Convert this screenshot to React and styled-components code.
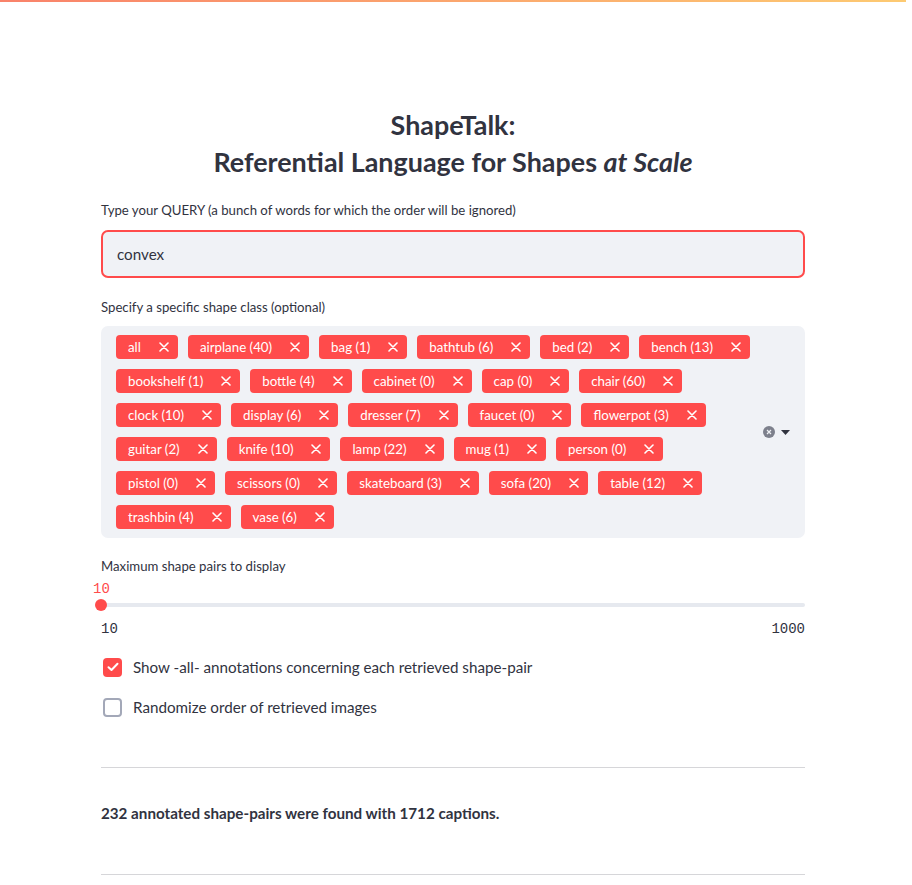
import React from 'react'
import styled, { createGlobalStyle } from 'styled-components'

const GlobalStyle = createGlobalStyle`
  html, body {
    margin: 0;
    padding: 0;
    background: #ffffff;
  }
  body {
    font-family: Lato, "Liberation Sans", sans-serif;
    color: #31333f;
  }
  * { box-sizing: border-box; }
`

const Decoration = styled.div`
  height: 2px;
  background: linear-gradient(90deg, #f9826a, #fdca72);
`

const Page = styled.div`
  padding-right: 6px;
`

const Block = styled.div`
  max-width: 736px;
  margin: 0 auto;
  padding: 104px 16px 40px;
  display: flex;
  flex-direction: column;
`

const Title = styled.h2`
  margin: 0 0 20px;
  font-size: 26.9px;
  line-height: 37px;
  font-weight: 700;
  text-align: center;
  color: #31333f;
  em { font-style: italic; }
`

const Label = styled.div`
  font-size: 13.2px;
  line-height: 20px;
  margin-bottom: ${p => p.mb || 10}px;
`

const Field = styled.div`
  margin-bottom: ${p => p.mb || 0}px;
`

const Input = styled.div`
  height: 48px;
  border: 2px solid #ff4b4b;
  border-radius: 7px;
  background: #f0f2f6;
  padding: 0 14px;
  display: flex;
  align-items: center;
  font-size: 15.2px;
`

const Select = styled.div`
  background: #f0f2f6;
  border-radius: 7px;
  padding: 4px 0 4px 10px;
  display: flex;
  align-items: center;
`

const Tags = styled.div`
  flex: 1;
  display: flex;
  flex-wrap: wrap;
`

const Tag = styled.span`
  height: 24px;
  margin: 5px;
  padding: 0 9px 0 12px;
  background: #ff4b4b;
  color: #ffffff;
  border-radius: 4px;
  display: inline-flex;
  align-items: center;
  font-size: 13.3px;
  white-space: nowrap;
  svg { margin-left: 18px; }
`

const Controls = styled.div`
  width: 44px;
  display: flex;
  align-items: center;
  gap: 6px;
  padding-left: 2px;
`

const SliderBox = styled.div`
  display: flex;
  flex-direction: column;
  margin-bottom: 16px;
`

const ValueLabel = styled.div`
  font-family: "Liberation Mono", "DejaVu Sans Mono", monospace;
  font-size: 14px;
  line-height: 20px;
  color: #ff4b4b;
  margin-left: -8px;
`

const Track = styled.div`
  position: relative;
  height: 12px;
  display: flex;
  align-items: center;
  &::before {
    content: '';
    flex: 1;
    height: 4px;
    border-radius: 2px;
    background: #e6e9ef;
  }
`

const Thumb = styled.span`
  position: absolute;
  left: -6px;
  top: 0;
  width: 12px;
  height: 12px;
  border-radius: 50%;
  background: #ff4b4b;
`

const Ticks = styled.div`
  margin-top: 8px;
  display: flex;
  justify-content: space-between;
  font-family: "Liberation Mono", "DejaVu Sans Mono", monospace;
  font-size: 14px;
  line-height: 20px;
  color: #31333f;
`

const CheckRow = styled.label`
  display: flex;
  align-items: center;
  height: 24px;
  margin-bottom: 16px;
  font-size: 15.2px;
  gap: 11px;
  padding-left: 2px;
`

const Box = styled.span`
  width: 19px;
  height: 19px;
  border-radius: 4px;
  display: inline-flex;
  align-items: center;
  justify-content: center;
  background: ${p => (p.checked ? '#ff4b4b' : '#ffffff')};
  border: ${p => (p.checked ? 'none' : '2px solid #a3a8b8')};
`

const Rule = styled.hr`
  border: none;
  border-top: 1px solid #d6d6d9;
  margin: ${p => p.mt}px 0 0;
  width: 100%;
`

const Summary = styled.p`
  margin: 33px 0 49px;
  font-size: 15.2px;
  line-height: 24px;
  font-weight: 700;
`

const classes = [
  'all', 'airplane (40)', 'bag (1)', 'bathtub (6)', 'bed (2)', 'bench (13)',
  'bookshelf (1)', 'bottle (4)', 'cabinet (0)', 'cap (0)', 'chair (60)',
  'clock (10)', 'display (6)', 'dresser (7)', 'faucet (0)', 'flowerpot (3)',
  'guitar (2)', 'knife (10)', 'lamp (22)', 'mug (1)', 'person (0)',
  'pistol (0)', 'scissors (0)', 'skateboard (3)', 'sofa (20)', 'table (12)',
  'trashbin (4)', 'vase (6)'
]

const Cross = () => (
  <svg width="10" height="10" viewBox="0 0 10 10">
    <path d="M1 1L9 9M9 1L1 9" stroke="#fff" strokeWidth="1.6" strokeLinecap="round" />
  </svg>
)

const App = () => {
  return <Page>
    <GlobalStyle />
    <Decoration />
    <Block>
      <Title>ShapeTalk:<br />Referential Language for Shapes <em>at Scale</em></Title>

      <Field mb={19}>
        <Label>Type your QUERY (a bunch of words for which the order will be ignored)</Label>
        <Input>convex</Input>
      </Field>

      <Field mb={18}>
        <Label mb={9}>Specify a specific shape class (optional)</Label>
        <Select>
          <Tags>
            {classes.map((name, index) => {
              return <Tag key={index}>{name}<Cross /></Tag>
            })}
          </Tags>
          <Controls>
            <svg width="12" height="12" viewBox="0 0 12 12">
              <circle cx="6" cy="6" r="6" fill="#7d808c" />
              <path d="M4 4L8 8M8 4L4 8" stroke="#f0f2f6" strokeWidth="1.2" />
            </svg>
            <svg width="9" height="5" viewBox="0 0 9 5">
              <path d="M0 0H9L4.5 5Z" fill="#31333f" />
            </svg>
          </Controls>
        </Select>
      </Field>

      <Label mb={3}>Maximum shape pairs to display</Label>
      <SliderBox>
        <ValueLabel>10</ValueLabel>
        <Track><Thumb /></Track>
        <Ticks><span>10</span><span>1000</span></Ticks>
      </SliderBox>

      <CheckRow>
        <Box checked>
          <svg width="12" height="10" viewBox="0 0 12 10">
            <path d="M1.5 5.2L4.5 8L10.5 1.8" stroke="#fff" strokeWidth="2" fill="none" strokeLinecap="round" strokeLinejoin="round" />
          </svg>
        </Box>
        Show -all- annotations concerning each retrieved shape-pair
      </CheckRow>
      <CheckRow>
        <Box />
        Randomize order of retrieved images
      </CheckRow>

      <Rule mt={32} />
      <Summary>232 annotated shape-pairs were found with 1712 captions.</Summary>
      <Rule mt={0} />
    </Block>
  </Page>
}

export default App
